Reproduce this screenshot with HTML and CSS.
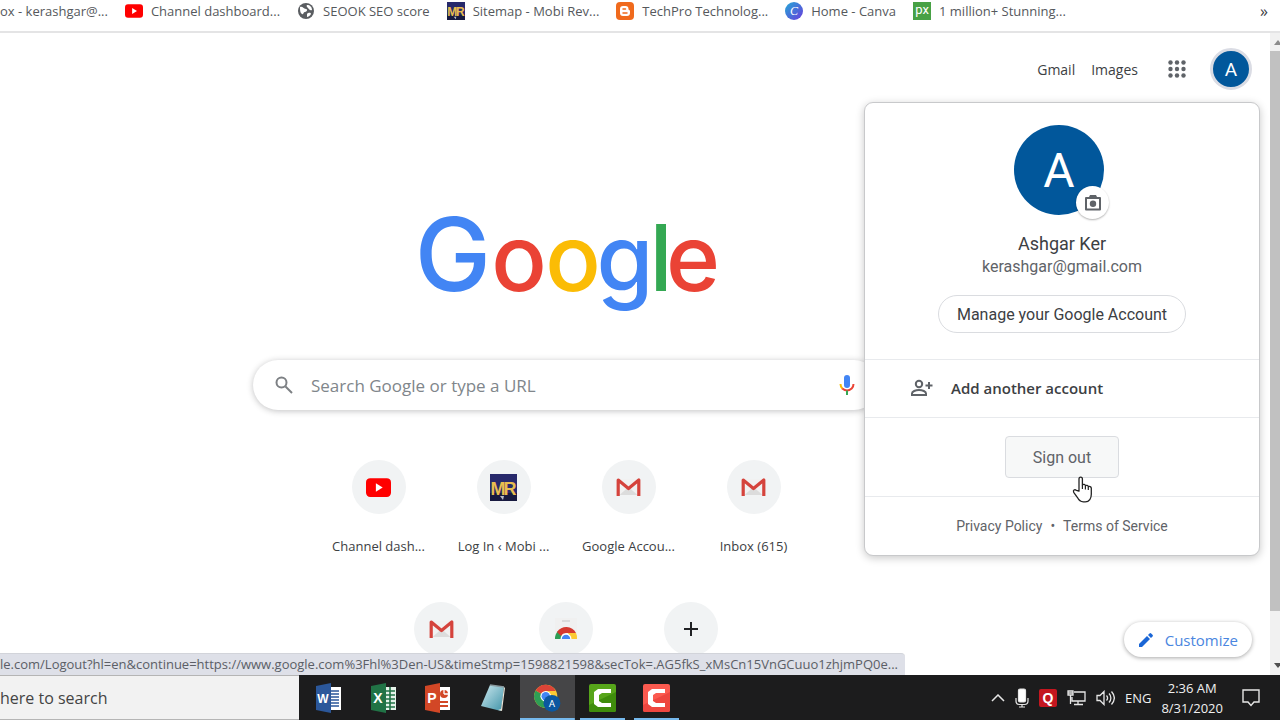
FILE: index.html
```html
<!DOCTYPE html>
<html lang="en">
<head>
    <meta charset="UTF-8">
    <meta name="viewport" content="width=device-width, initial-scale=1.0">
    <title>New Tab</title>
    <link rel="stylesheet" href="styles.css">
</head>
<body>
    <svg class="sprite" aria-hidden="true">
        <symbol id="i-youtube" viewBox="0 0 24 18">
            <rect width="24" height="18" rx="4" fill="#f00"/>
            <path d="M9.500 5l6.500 4-6.500 4z" fill="#fff"/>
        </symbol>
        <symbol id="i-mr" viewBox="0 0 27 27">
            <rect width="27" height="27" fill="#27296b"/>
            <rect y="19" width="27" height="8" fill="#17193f"/>
            <text y="21" text-anchor="middle" font-family="Liberation Sans" font-weight="bold" font-size="18" fill="#e9bd4f"><tspan x="8">M</tspan><tspan x="20">R</tspan></text>
            <path d="M10 22h4l-1 4z" fill="#b9bccb"/>
        </symbol>
        <symbol id="i-gmail" viewBox="0 0 24 18">
            <path d="M3 1h18v16H3z" fill="#f1f1f1"/>
            <path d="M3 17l9-8 9 8z" fill="#dcdcdc"/>
            <path d="M1.700 18V2l10.300 8.500L22.300 2v16" fill="none" stroke="#d5433c" stroke-width="3.200" stroke-linejoin="round"/>
        </symbol>
    </svg>

    <nav class="bookmarks">
        <a class="bookmark" href="#">ox - kerashgar@...</a>
        <a class="bookmark" href="#"><svg class="bookmark-icon"><use href="#i-youtube"/></svg>Channel dashboard...</a>
        <a class="bookmark" href="#">
            <svg class="bookmark-icon" viewBox="0 0 18 18"><circle cx="9" cy="9" r="8" fill="#5a5d61"/><path d="M3 5c3-1 3 2 6 2 2 0 1 3-1 3s-1 3-3 2S3 8 3 5zM10 3c3 0 5 2 5 5-2 1-3-1-4-2s-2-2-1-3zM10 12c2-2 4-1 4 0-1 2-3 3-4 3z" fill="#fff"/></svg>SEOOK SEO score</a>
        <a class="bookmark" href="#"><svg class="bookmark-icon"><use href="#i-mr"/></svg>Sitemap - Mobi Rev...</a>
        <a class="bookmark" href="#">
            <svg class="bookmark-icon" viewBox="0 0 18 18"><rect width="18" height="18" rx="4" fill="#f06a1d"/><path d="M7 4h2.500A3 3 0 0 1 12.500 7c0 1 .5 1.200 1.500 1.500V11a3 3 0 0 1-3 3H7a3 3 0 0 1-3-3V7a3 3 0 0 1 3-3z" fill="#fff"/><path d="M7 7h2.500M7 11h4" stroke="#f06a1d" stroke-width="1.500" stroke-linecap="round"/></svg>TechPro Technolog...</a>
        <a class="bookmark" href="#">
            <svg class="bookmark-icon" viewBox="0 0 18 18"><defs><linearGradient id="canva" x1="0" y1="0" x2="1" y2="1"><stop offset="0" stop-color="#23a9d6"/><stop offset="1" stop-color="#6a3bdc"/></linearGradient></defs><circle cx="9" cy="9" r="9" fill="url(#canva)"/><text x="9" y="13" text-anchor="middle" font-family="Liberation Serif" font-style="italic" font-size="12" fill="#fff">C</text></svg>Home - Canva</a>
        <a class="bookmark" href="#">
            <svg class="bookmark-icon" viewBox="0 0 18 18"><rect width="18" height="18" fill="#48a145"/><text x="9" y="12" text-anchor="middle" font-family="Roboto" font-size="13" fill="#fff">px</text></svg>1 million+ Stunning...</a>
        <button class="more" aria-label="More bookmarks">»</button>
    </nav>

    <main class="viewport">
        <div class="page">
            <header class="top-links">
                <a href="#">Gmail</a>
                <a href="#">Images</a>
                <button class="apps" aria-label="Google apps">
                    <svg width="18" height="18" viewBox="0 0 18 18" fill="#5f6368">
                        <circle cx="2.500" cy="2.500" r="2.200"/><circle cx="9" cy="2.500" r="2.200"/><circle cx="15.500" cy="2.500" r="2.200"/>
                        <circle cx="2.500" cy="9" r="2.200"/><circle cx="9" cy="9" r="2.200"/><circle cx="15.500" cy="9" r="2.200"/>
                        <circle cx="2.500" cy="15.500" r="2.200"/><circle cx="9" cy="15.500" r="2.200"/><circle cx="15.500" cy="15.500" r="2.200"/>
                    </svg>
                </button>
                <button class="avatar" aria-label="Account">A</button>
            </header>

            <div class="center">
                <svg class="logo" width="310" height="140" viewBox="0 0 310 140" role="img" aria-label="Google">
                    <text y="101" text-anchor="middle"><tspan class="blue cap" x="42">G</tspan><tspan class="red" x="108">o</tspan><tspan class="yellow" x="162">o</tspan><tspan class="blue" x="214">g</tspan><tspan class="green" x="250">l</tspan><tspan class="red" x="282">e</tspan></text>
                </svg>

                <form class="search">
                    <svg width="18" height="18" viewBox="0 0 18 18" fill="none" stroke="#7d8084" stroke-width="2"><circle cx="6.500" cy="6.500" r="5"/><path d="M10.500 10.500l6.500 6.500"/></svg>
                    <input type="text" placeholder="Search Google or type a URL" aria-label="Search Google or type a URL">
                    <button type="button" aria-label="Search by voice">
                        <svg width="16" height="22" viewBox="0 0 16 22" fill="none" stroke-width="2">
                            <rect x="5" y="1" width="6" height="13" rx="3" fill="#4285f4"/>
                            <path d="M1.500 10c0 2 .7 3.500 2 4.700" stroke="#fbbc05"/>
                            <path d="M3.300 14.500c3 2.600 6.500 2.600 9.400 0 1.200-1.200 1.800-2.600 1.800-4.500" stroke="#ea4335"/>
                            <path d="M8 16.500V21" stroke="#34a853"/>
                        </svg>
                    </button>
                </form>

                <div class="tiles">
                    <a class="tile" href="#"><span class="circle"><svg width="25" height="19"><use href="#i-youtube"/></svg></span>Channel dash...</a>
                    <a class="tile" href="#"><span class="circle"><svg width="27" height="27"><use href="#i-mr"/></svg></span>Log In ‹ Mobi ...</a>
                    <a class="tile" href="#"><span class="circle"><svg width="25" height="18"><use href="#i-gmail"/></svg></span>Google Accou...</a>
                    <a class="tile" href="#"><span class="circle"><svg width="25" height="18"><use href="#i-gmail"/></svg></span>Inbox (615)</a>
                    <a class="tile" href="#" aria-label="Gmail"><span class="circle"><svg width="25" height="18"><use href="#i-gmail"/></svg></span></a>
                    <a class="tile" href="#" aria-label="Web Store"><span class="circle">
                        <svg width="26" height="26" viewBox="0 0 26 26">
                            <path d="M2 2h22v20H2z" fill="#f0f0f0"/><path d="M9 5h8" stroke="#dadada" stroke-width="2"/>
                            <path d="M2 23a11 11 0 0 1 3-8l5 6-1 2z" fill="#2e9e55"/>
                            <path d="M4 16a11 11 0 0 1 19 1H13a6 6 0 0 0-5 3z" fill="#d5392f"/>
                            <path d="M15 17h8a11 11 0 0 1 1 6h-6z" fill="#fcc934"/>
                            <path d="M7.500 23a5.500 5.500 0 0 1 11 0z" fill="#fff"/><path d="M8.800 23a4.200 4.200 0 0 1 8.400 0z" fill="#4285f4"/>
                        </svg></span></a>
                    <button class="tile" aria-label="Add shortcut"><span class="circle"><svg width="14" height="14" viewBox="0 0 14 14" stroke="#202124" stroke-width="2"><path d="M7 0v14M0 7h14"/></svg></span></button>
                </div>
            </div>

            <button class="customize">
                <svg width="14" height="14" viewBox="0 0 14 14" fill="#1a66d6"><path d="M0 14v-3l8-8 3 3-8 8zM9 2l1.500-1.500a1.200 1.200 0 0 1 1.700 0l1.300 1.300a1.200 1.200 0 0 1 0 1.700L12 5z"/></svg>
                Customize
            </button>
        </div>

        <div class="scrollbar">
            <svg width="10" height="18" viewBox="0 0 10 18" fill="#8b8b8b"><path d="M4 12l4-5 4 5z"/></svg>
            <div class="thumb"></div>
            <svg width="10" height="18" viewBox="0 0 10 18" fill="#505050"><path d="M4 6l4 5 4-5z"/></svg>
        </div>

        <section class="account">
            <div class="profile">
                <div class="photo">A
                    <button class="camera" aria-label="Change profile picture">
                        <svg width="18" height="16" viewBox="0 0 18 16"><path d="M2 3h14v11.500H2z" fill="none" stroke="#5f6368" stroke-width="2" stroke-linejoin="round"/><path d="M6 0h6l1 2H5z" fill="#5f6368"/><circle cx="9" cy="8.700" r="3.200" fill="#5f6368"/></svg>
                    </button>
                </div>
                <div class="name">Ashgar Ker</div>
                <div class="email">kerashgar@gmail.com</div>
                <button class="manage">Manage your Google Account</button>
            </div>
            <button class="add">
                <svg width="22" height="18" viewBox="0 0 22 18" fill="none" stroke="#5f6368" stroke-width="2"><circle cx="8" cy="5" r="3.200"/><path d="M1 16v-1.500c0-2 3.500-3.500 7-3.500s7 1.500 7 3.500V16zM18 3v7M14.500 6.500h7"/></svg>
                Add another account
            </button>
            <div class="signout">
                <button>Sign out</button>
            </div>
            <footer class="legal">
                <a href="#">Privacy Policy</a>
                <span>•</span>
                <a href="#">Terms of Service</a>
            </footer>
            <svg class="cursor" width="22" height="27" viewBox="0 0 22 27"><path d="M7 15V3c0-2.600 3.400-2.600 3.400 0v6c.8-1 3-.7 3 .8.800-.9 2.900-.5 2.900 1 .9-.7 3-.2 3 1.500v6c0 4-2 7.500-6 7.500h-2c-3 0-4.500-1.500-6-4.500l-3.600-5c-1-2 1-3.300 2.600-2z" fill="#fff" stroke="#222" stroke-width="1.300" stroke-linejoin="round"/><path d="M10.400 9v4M13.400 10v3.500M16.300 11v3" stroke="#222" stroke-width="1.200"/></svg>
        </section>

        <div class="status">le.com/Logout?hl=en&amp;continue=https://www.google.com%3Fhl%3Den-US&amp;timeStmp=1598821598&amp;secTok=.AG5fkS_xMsCn15VnGCuuo1zhjmPQ0e...</div>
    </main>

    <div class="taskbar">
        <input class="task-search" type="text" placeholder="here to search" aria-label="here to search">
        <div class="apps-row">
            <button class="task" aria-label="Word"><svg width="26" height="32" viewBox="0 0 26 32"><path d="M13 5h12v23H13z" fill="#fff"/><path d="M14 9h9M14 12h9M14 15h9M14 18h9M14 21h9M14 24h9" stroke="#2b579a" stroke-width="1.300"/><path d="M0 4l15-3v30L0 28z" fill="#2b579a"/><text x="7" y="21" text-anchor="middle" font-family="Liberation Sans" font-weight="bold" font-size="12" fill="#fff">W</text></svg></button>
            <button class="task" aria-label="Excel"><svg width="26" height="32" viewBox="0 0 26 32"><path d="M13 5h12v23H13z" fill="#e6f2ea"/><path d="M15 9h9M15 13h9M15 17h9M15 21h9M15 25h9M19 5v23" stroke="#217346" stroke-width="1.600"/><path d="M0 4l15-3v30L0 28z" fill="#217346"/><text x="7" y="21" text-anchor="middle" font-family="Liberation Sans" font-weight="bold" font-size="14" fill="#fff">X</text></svg></button>
            <button class="task" aria-label="PowerPoint"><svg width="26" height="32" viewBox="0 0 26 32"><path d="M13 5h12v23H13z" fill="#fff"/><circle cx="19" cy="12" r="4" fill="#d24726"/><path d="M19 12V7M19 12h5" stroke="#fff" stroke-width="1.300"/><path d="M15 20h8M15 24h8" stroke="#d24726" stroke-width="2"/><path d="M0 4l15-3v30L0 28z" fill="#d24726"/><text x="7" y="21" text-anchor="middle" font-family="Liberation Sans" font-weight="bold" font-size="14" fill="#fff">P</text></svg></button>
            <button class="task" aria-label="Notepad"><svg width="26" height="32" viewBox="0 0 26 32"><defs><linearGradient id="note" x1="0" y1="0" x2="1" y2="1"><stop offset="0" stop-color="#cfeaf0"/><stop offset="1" stop-color="#3f93a8"/></linearGradient></defs><path d="M10 3l14 2-3 24L1 24z" fill="url(#note)"/><path d="M24 5l1 1-3 23-4-1 3-1z" fill="#e8e4d8"/><path d="M10 3l14 2" stroke="#8a9a9f" stroke-width="1.500"/></svg></button>
            <button class="task active running" aria-label="Chrome"><svg width="27" height="32" viewBox="0 0 30 36"><circle cx="13" cy="16" r="13" fill="#fcc934"/><path d="M13 16L1.700 9.500A13 13 0 0 0 13 29l6-9z" fill="#2e9e55"/><path d="M13 16L1.700 9.500A13 13 0 0 1 24.300 10H13z" fill="#db4437"/><circle cx="13" cy="16" r="6" fill="#fff"/><circle cx="13" cy="16" r="4.700" fill="#4285f4"/><circle cx="20" cy="24" r="9.500" fill="#0b57a0"/><text x="20" y="28" text-anchor="middle" font-family="Roboto" font-size="11" fill="#fff">A</text></svg></button>
            <button class="task running" aria-label="Camtasia"><svg width="27" height="28" viewBox="0 0 27 28"><rect width="27" height="28" rx="2" fill="#57a51a"/><path d="M0 21L27 8v18a2 2 0 0 1-2 2H2a2 2 0 0 1-2-2z" fill="#3f8d0c"/><path d="M22 5H9L5 8v12l4 3h13v-4h-9l-3-2v-6l3-2h9z" fill="#fff"/></svg></button>
            <button class="task running" aria-label="Camtasia Recorder"><svg width="27" height="28" viewBox="0 0 27 28"><rect width="27" height="28" rx="2" fill="#fb5a4f"/><path d="M0 21L27 8v18a2 2 0 0 1-2 2H2a2 2 0 0 1-2-2z" fill="#ee463f"/><path d="M22 5H9L5 8v12l4 3h13v-4h-9l-3-2v-6l3-2h9z" fill="#fff"/></svg></button>
        </div>
        <div class="tray">
            <svg width="14" height="8" viewBox="0 0 14 8" fill="none" stroke="#e6e6e6" stroke-width="1.500"><path d="M1 7l6-6 6 6"/></svg>
            <svg width="14" height="20" viewBox="0 0 14 20" fill="none" stroke="#e6e6e6" stroke-width="1.200"><rect x="3.500" y="1" width="7" height="13" rx="1.500" fill="#fff"/><path d="M1 10v3c0 2 1.500 3.500 3.500 3.500h5c2 0 3.500-1.500 3.500-3.500v-3M7 16.500V19M4 19h6"/></svg>
            <svg width="18" height="18" viewBox="0 0 18 18"><rect width="18" height="18" rx="2" fill="#c4161f"/><text x="9" y="14" text-anchor="middle" font-family="Liberation Sans" font-weight="bold" font-size="14" fill="#fff">Q</text></svg>
            <svg width="19" height="16" viewBox="0 0 19 16" fill="none" stroke="#e6e6e6" stroke-width="1.300"><path d="M7 2h11v9H5V7M1 1h5v4H1zM3.500 5v9M1 3h5M11 11v3M7 14.500h9"/></svg>
            <svg width="19" height="16" viewBox="0 0 19 16" fill="none" stroke="#e6e6e6" stroke-width="1.300"><path d="M1 5.500h3l4-4v13l-4-4H1zM10.500 5.500c1.300 1.500 1.300 3.500 0 5M13 3.500c2.500 2.500 2.500 6.500 0 9M15.500 1.500c3.500 4 3.500 9 0 13"/></svg>
            <span class="lang">ENG</span>
            <time class="clock">2:36 AM<br>8/31/2020</time>
            <svg width="18" height="18" viewBox="0 0 18 18" fill="none" stroke="#e6e6e6" stroke-width="1.400"><path d="M1 1h16v12h-5l-3 3.500L6 13H1z"/></svg>
        </div>
    </div>
</body>
</html>
```

FILE: styles.css
```css
* {
    box-sizing: border-box;
}

body {
    margin: 0;
    height: 100vh;
    display: flex;
    flex-direction: column;
    overflow: hidden;
    background: #fff;
    color: #3c4043;
    font-family: 'Open Sans', 'Noto Sans', sans-serif;
    font-size: 13px;
}

a {
    color: inherit;
    text-decoration: none;
}

button {
    padding: 0;
    border: none;
    background: none;
    color: inherit;
    font: inherit;
    cursor: pointer;
}

input {
    border: none;
    outline: none;
    font: inherit;
}

svg {
    flex: none;
}

.sprite {
    display: none;
}

/* bookmarks bar */
.bookmarks {
    display: flex;
    align-items: center;
    gap: 17px;
    height: 33px;
    padding: 0 12px 9px 0;
    border-bottom: 2px solid #e4e4e5;
    white-space: nowrap;
}

.bookmark {
    display: flex;
    align-items: center;
    gap: 8px;
    color: #55585c;
}

.bookmark-icon {
    width: 18px;
    height: 18px;
}

.more {
    margin-left: auto;
    font-size: 16px;
}

/* page */
.viewport {
    position: relative;
    flex: 1;
    min-height: 0;
    display: flex;
}

.page {
    position: relative;
    flex: 1;
    overflow: hidden;
}

.top-links {
    display: flex;
    justify-content: flex-end;
    align-items: center;
    gap: 16px;
    height: 72px;
    padding-right: 18px;
    font-size: 14px;
}

.apps {
    display: flex;
    margin: 0 8px 0 14px;
}

.avatar {
    width: 42px;
    height: 42px;
    border: 3px solid #dadce4;
    border-radius: 50%;
    background: #01579b;
    color: #fff;
    font-family: Roboto, sans-serif;
    font-size: 19px;
}

.center {
    display: flex;
    flex-direction: column;
    align-items: center;
    padding-right: 138px;
}

.logo {
    margin: 85px 0 30px;
    font-family: Inter, Roboto, sans-serif;
    font-size: 92px;
    font-weight: 500;
}

.cap { font-size: 102px; }
.blue { fill: #4285f4; }
.red { fill: #ea4335; }
.yellow { fill: #fbbc05; }
.green { fill: #34a853; }

.search {
    display: flex;
    align-items: center;
    gap: 16px;
    width: 626px;
    height: 50px;
    padding: 0 24px 0 22px;
    border-radius: 25px;
    box-shadow: 0 1px 6px rgba(32, 33, 36, 0.28);
}

.search input {
    flex: 1;
    font-size: 17px;
}

.search input::placeholder {
    color: #80868b;
    opacity: 1;
}

.search button {
    display: flex;
}

.tiles {
    display: flex;
    flex-wrap: wrap;
    justify-content: center;
    row-gap: 46px;
    width: 500px;
    padding-top: 50px;
}

.tile {
    display: flex;
    flex-direction: column;
    align-items: center;
    gap: 22px;
    width: 125px;
    height: 96px;
    line-height: 20px;
}

.circle {
    display: flex;
    align-items: center;
    justify-content: center;
    width: 54px;
    height: 54px;
    border-radius: 50%;
    background: #f1f3f4;
}

.customize {
    position: absolute;
    right: 18px;
    bottom: 18px;
    display: flex;
    align-items: center;
    gap: 12px;
    height: 35px;
    padding: 0 14px 0 15px;
    border-radius: 18px;
    background: #fff;
    box-shadow: 0 1px 4px rgba(0, 0, 0, 0.35);
    color: #4a86e0;
    font-size: 15px;
}

.scrollbar {
    display: flex;
    flex-direction: column;
    width: 10px;
    background: #f1f1f1;
}

.thumb {
    height: 560px;
    margin-bottom: auto;
    background: #c1c1c1;
}

/* account menu */
.account {
    position: absolute;
    top: 69px;
    right: 20px;
    width: 396px;
    border: 1px solid #c8c9cb;
    border-radius: 9px;
    background: #fff;
    box-shadow: 0 2px 8px rgba(0, 0, 0, 0.22);
    font-family: Roboto, sans-serif;
}

.profile {
    display: flex;
    flex-direction: column;
    align-items: center;
    padding: 22px 0 26px;
}

.photo {
    position: relative;
    width: 90px;
    height: 90px;
    margin-right: 6px;
    border-radius: 50%;
    background: #01579b;
    color: #fff;
    font-size: 48px;
    line-height: 92px;
    text-align: center;
}

.camera {
    position: absolute;
    right: -5px;
    bottom: -4px;
    display: flex;
    align-items: center;
    justify-content: center;
    width: 33px;
    height: 33px;
    border-radius: 50%;
    background: #fff;
    box-shadow: 0 1px 2px rgba(0, 0, 0, 0.3);
}

.name {
    margin-top: 17px;
    font-size: 18px;
    line-height: 24px;
}

.email {
    color: #5f6368;
    font-size: 16px;
    line-height: 22px;
}

.manage {
    height: 38px;
    margin-top: 17px;
    padding: 0 18px;
    border: 1px solid #dadce0;
    border-radius: 19px;
    font-size: 16px;
}

.add {
    display: flex;
    align-items: center;
    gap: 18px;
    width: 100%;
    height: 58px;
    padding: 0 0 2px 46px;
    border-top: 1px solid #e8eaed;
    font-family: 'Open Sans', 'Noto Sans', sans-serif;
    font-size: 15px;
    font-weight: 600;
}

.signout {
    display: flex;
    justify-content: center;
    padding: 18px 0;
    border-top: 1px solid #e8eaed;
    border-bottom: 1px solid #e8eaed;
}

.signout button {
    width: 114px;
    height: 42px;
    border: 1px solid #dadce0;
    border-radius: 4px;
    background: #f7f8f8;
    color: #5f6368;
    font-size: 16px;
}

.legal {
    display: flex;
    justify-content: center;
    gap: 8px;
    padding: 19px 0;
    color: #5f6368;
    font-size: 14px;
    line-height: 20px;
}

.cursor {
    position: absolute;
    top: 373px;
    left: 207px;
}

.status {
    position: absolute;
    left: 0;
    bottom: 0;
    height: 22px;
    padding-right: 7px;
    border-top: 1px solid #d2d4da;
    border-radius: 0 4px 0 0;
    background: #dee0e8;
    color: #5b5e66;
    line-height: 20px;
    white-space: nowrap;
}

/* taskbar */
.taskbar {
    display: flex;
    height: 45px;
    background: #1c1c1d;
    color: #f0f0f0;
}

.task-search {
    width: 299px;
    padding: 0;
    border-top: 1px solid #b5b5b5;
    border-bottom: 1px solid #b5b5b5;
    background: #f2f2f2;
    font-size: 16px;
}

.task-search::placeholder {
    color: #444;
    opacity: 1;
}

.apps-row {
    display: flex;
    width: 382px;
    margin-left: 3px;
}

.task {
    flex: 1;
    display: flex;
    align-items: center;
    justify-content: center;
}

.running {
    background: linear-gradient(#76b9ed, #76b9ed) center bottom / 45px 2px no-repeat;
}

.active {
    background-color: #454547;
    background-size: 100% 2px;
}

.tray {
    display: flex;
    align-items: center;
    gap: 10px;
    margin-left: auto;
    padding-right: 20px;
}

.clock {
    margin-right: 9px;
    line-height: 20px;
    text-align: center;
}
```
